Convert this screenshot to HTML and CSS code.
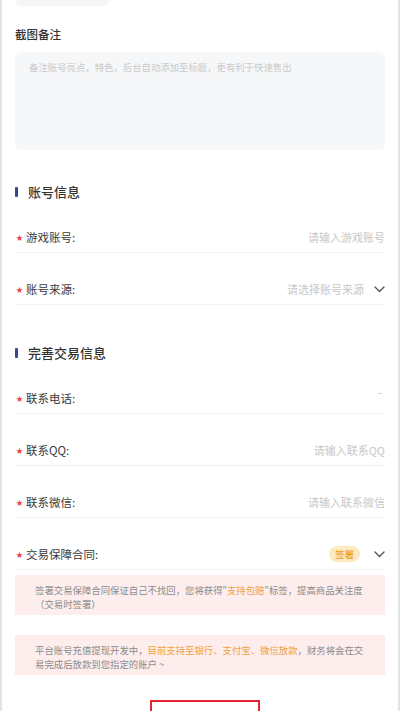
FILE: index.html
```html
<!DOCTYPE html>
<html lang="zh">
<head>
<meta charset="utf-8">
<link rel="stylesheet" href="styles.css">
</head>
<body>
<div class="page">
  <div class="top-box"></div>
  <div class="field-title">截图备注</div>
  <div class="textarea">备注账号亮点，特色，后台自动添加至标题，更有利于快速售出</div>

  <div class="section-head first"><span class="bar"></span>账号信息</div>
  <div class="row">
    <div class="label"><span class="star">★</span>游戏账号:</div>
    <div class="right"><span class="ph">请输入游戏账号</span></div>
  </div>
  <div class="row">
    <div class="label"><span class="star">★</span>账号来源:</div>
    <div class="right"><span class="ph">请选择账号来源</span>
      <svg class="chev" width="11" height="7" viewBox="0 0 11 7"><polyline points="1,1 5.5,5.5 10,1" fill="none" stroke="#555" stroke-width="1.4" stroke-linecap="round" stroke-linejoin="round"/></svg>
    </div>
  </div>

  <div class="section-head"><span class="bar"></span>完善交易信息</div>
  <div class="row">
    <div class="label"><span class="star">★</span>联系电话:</div>
    <div class="right"><span class="dash"></span></div>
  </div>
  <div class="row">
    <div class="label"><span class="star">★</span>联系QQ:</div>
    <div class="right"><span class="ph">请输入联系QQ</span></div>
  </div>
  <div class="row">
    <div class="label"><span class="star">★</span>联系微信:</div>
    <div class="right"><span class="ph">请输入联系微信</span></div>
  </div>
  <div class="row">
    <div class="label"><span class="star">★</span>交易保障合同:</div>
    <div class="right"><span class="badge">签署</span>
      <svg class="chev" width="11" height="7" viewBox="0 0 11 7"><polyline points="1,1 5.5,5.5 10,1" fill="none" stroke="#555" stroke-width="1.4" stroke-linecap="round" stroke-linejoin="round"/></svg>
    </div>
  </div>

  <div class="notice first-notice">签署交易保障合同保证自己不找回，您将获得"<span class="hl">支持包赔</span>"标签，提高商品关注度（交易时签署）</div>
  <div class="notice second-notice">平台账号充值提现开发中，<span class="hl">目前支持至银行、支付宝、微信放款</span>，财务将会在交易完成后放款到您指定的账户 ~</div>

  <div class="submit-wrap"><div class="red-box"></div></div>
</div>
</body>
</html>
```

FILE: styles.css
```css
* { box-sizing: border-box; }
html, body { margin: 0; padding: 0; background: #fff; }
body {
  font-family: "Noto Sans CJK SC", "Noto Sans", sans-serif;
  color: #333;
  overflow: hidden;
}
.page {
  width: 400px;
  min-height: 711px;
  border-left: 2px solid #e3e3e3;
  border-right: 2px solid #e3e3e3;
  padding: 0 13px;
}
.top-box {
  width: 94px;
  height: 6px;
  background: #f5f6f8;
  border-radius: 0 0 6px 6px;
}
.field-title {
  margin-top: 20px;
  font-size: 11.5px;
  line-height: 16px;
  font-weight: 500;
  color: #333;
}
.textarea {
  margin-top: 10px;
  height: 98px;
  background: #f6f7f9;
  border-radius: 6px;
  padding: 8px 14px;
  font-size: 9.4px;
  line-height: 14px;
  color: #c9c9c9;
}
.section-head {
  margin-top: 39px;
  display: flex;
  align-items: center;
  font-size: 13px;
  line-height: 18px;
  font-weight: 500;
  color: #333;
}
.section-head.first { margin-top: 33px; }
.bar {
  width: 3px;
  height: 10px;
  background: #3b4a8e;
  border-radius: 1px;
  margin-right: 10px;
}
.row {
  display: flex;
  justify-content: space-between;
  align-items: center;
  height: 52px;
  padding-top: 28px;
  padding-bottom: 7px;
  border-bottom: 1px solid #f1f1f1;
}
.label {
  display: flex;
  align-items: center;
  font-size: 11.5px;
  line-height: 16px;
  color: #3a3a3a;
}
.star {
  color: #e8414a;
  font-size: 7px;
  width: 10px;
  margin-left: 1px;
  line-height: 16px;
}
.right {
  display: flex;
  align-items: center;
  gap: 10px;
  font-size: 11px;
  line-height: 16px;
}
.ph { color: #c8c8c8; }
.chev { display: block; }
.dash {
  width: 4px;
  height: 1px;
  background: #d8d8d8;
  margin-bottom: 10px;
  margin-right: 3px;
}
.badge {
  background: #fdeac0;
  color: #eea123;
  font-size: 9.5px;
  font-weight: 500;
  line-height: 16px;
  padding: 0 6px;
  border-radius: 8px;
  margin-right: 4px;
}
.notice {
  background: #fdeeed;
  color: #8a8a8a;
  font-size: 9.4px;
  line-height: 14px;
  padding: 8px 20px 4px;
  height: 40px;
}
.first-notice { margin-top: 5px; }
.second-notice { margin-top: 20px; }
.hl { color: #f0a040; }
.submit-wrap {
  margin-top: 25px;
  display: flex;
  padding-left: 135px;
}
.red-box {
  width: 110px;
  height: 30px;
  border: 2px solid #e5252f;
  border-bottom: none;
}
```
